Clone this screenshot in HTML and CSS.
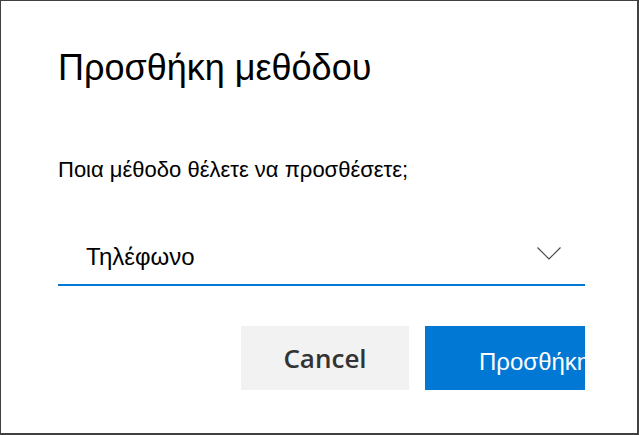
FILE: index.html
```html
<!DOCTYPE html>
<html lang="el">
<head>
<meta charset="utf-8">
<title>Προσθήκη μεθόδου</title>
<link rel="stylesheet" href="styles.css">
</head>
<body>
<div class="dialog">
  <h1 class="title">Προσθήκη μεθόδου</h1>
  <p class="prompt">Ποια μέθοδο θέλετε να προσθέσετε;</p>
  <div class="select">
    <span class="select-value">Τηλέφωνο</span>
    <svg class="chevron" width="24" height="13" viewBox="0 0 24 13" aria-hidden="true">
      <path d="M0.5 0.5 L12 12 L23.5 0.5" fill="none" stroke="#444" stroke-width="1.1"/>
    </svg>
  </div>
  <div class="actions">
    <button class="btn btn-cancel">Cancel</button>
    <button class="btn btn-primary">Προσθήκη</button>
  </div>
</div>
</body>
</html>
```

FILE: styles.css
```css
html, body {
  margin: 0;
  padding: 0;
  background: #fff;
}

body {
  width: 639px;
  height: 435px;
  box-sizing: border-box;
  border-style: solid;
  border-color: #404040;
  border-width: 1px 2px 2px 1px;
  overflow: hidden;
  font-family: "Liberation Sans", Arial, sans-serif;
  color: #000;
}

.dialog {
  padding: 47px 52px 0 57px;
}

.title {
  margin: 0;
  font-size: 36px;
  line-height: 40px;
  font-weight: normal;
}

.prompt {
  margin: 69px 0 0;
  font-size: 22px;
  line-height: 26px;
}

.select {
  margin-top: 44px;
  display: flex;
  justify-content: space-between;
  align-items: flex-start;
  padding: 16px 24px 13px 28px;
  border-bottom: 2px solid #0078d4;
}

.select-value {
  font-size: 24px;
  line-height: 28px;
}

.chevron {
  display: block;
  margin-top: 4px;
}

.actions {
  margin-top: 40px;
  display: flex;
  justify-content: flex-end;
  gap: 16px;
}

.btn {
  border: 0;
  margin: 0;
  height: 64px;
  padding: 0;
  cursor: pointer;
}

.btn-cancel {
  width: 168px;
  background: #f2f2f2;
  color: #333;
  font-family: "Open Sans", sans-serif;
  font-weight: 600;
  font-size: 26px;
}

.btn-primary {
  width: 160px;
  background: #0078d4;
  color: #fff;
  font-family: "Liberation Sans", Arial, sans-serif;
  font-size: 24px;
  text-align: left;
  padding: 8px 0 0 54px;
  white-space: nowrap;
  overflow: hidden;
}
```
